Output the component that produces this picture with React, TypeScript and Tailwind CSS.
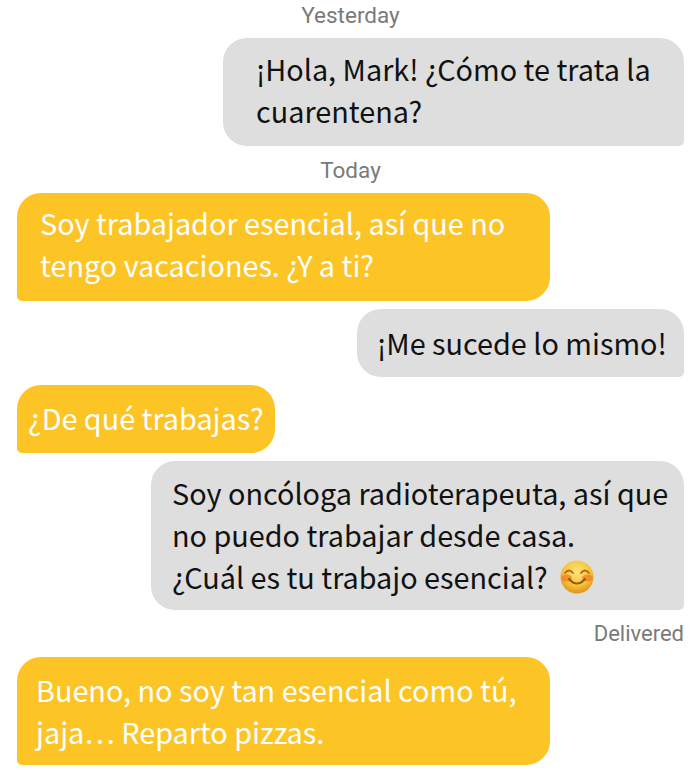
import React from 'react';

const font = "font-['Noto_Sans_CJK_SC','Noto_Sans',sans-serif]";

const Smile: React.FC = () => (
  <svg viewBox="0 0 34 34" className="inline-block w-[34px] h-[34px] align-[-5px] ml-[6px]">
    <defs>
      <radialGradient id="face" cx="50%" cy="35%" r="65%">
        <stop offset="0%" stopColor="#fde27a" />
        <stop offset="60%" stopColor="#f8c63d" />
        <stop offset="100%" stopColor="#e0921c" />
      </radialGradient>
    </defs>
    <circle cx="17" cy="17" r="16.5" fill="url(#face)" />
    <ellipse cx="6.5" cy="18" rx="5.5" ry="3.5" fill="#ee7f22" opacity="0.75" />
    <ellipse cx="27.5" cy="18" rx="5.5" ry="3.5" fill="#ee7f22" opacity="0.75" />
    <path d="M5 13q4-5 8 0M21 13q4-5 8 0" fill="none" stroke="#b5651a" strokeWidth="1.8" strokeLinecap="round" />
    <path d="M9 19q8 9 16 0" fill="none" stroke="#9a5512" strokeWidth="2" strokeLinecap="round" />
  </svg>
);

const Mine: React.FC<{ className: string; children: React.ReactNode }> = ({ className, children }) => (
  <div className={`self-end bg-[#dedede] text-[#111] rounded-[24px] rounded-br-[5px] ${className}`}>{children}</div>
);

const Theirs: React.FC<{ className: string; children: React.ReactNode }> = ({ className, children }) => (
  <div className={`self-start bg-[#fdc425] text-white rounded-[24px] rounded-bl-[5px] ${className}`}>{children}</div>
);

export default function App() {
  return (
    <div className={`w-[700px] h-[773px] overflow-hidden bg-white flex flex-col pl-[17px] pr-[16px] text-[28.8px] leading-[42px] ${font}`}>
      <div className="h-[38px] pt-[2px] text-center font-['Roboto',sans-serif] text-[22.5px] leading-[26px] text-[#7a7a7a]">Yesterday</div>

      <Mine className="w-[461px] h-[108px] pl-[33px] pt-[10px]">
        ¡Hola, Mark! ¿Cómo te trata la<br />cuarentena?
      </Mine>

      <div className="h-[47px] pt-[11px] text-center font-['Roboto',sans-serif] text-[22.5px] leading-[26px] text-[#7a7a7a]">Today</div>

      <Theirs className="w-[533px] h-[108px] pl-[23px] pt-[9px]">
        Soy trabajador esencial, así que no<br />tengo vacaciones. ¿Y a ti?
      </Theirs>

      <Mine className="w-[327px] h-[68px] mt-[8px] pl-[20px] pt-[13px]">¡Me sucede lo mismo!</Mine>

      <Theirs className="w-[258px] h-[68px] mt-[8px] pl-[11px] pt-[12px]">¿De qué trabajas?</Theirs>

      <Mine className="w-[533px] h-[149px] mt-[8px] pl-[21px] pt-[11px]">
        Soy oncóloga radioterapeuta, así que<br />no puedo trabajar desde casa.<br />¿Cuál es tu trabajo esencial? <Smile />
      </Mine>

      <div className="h-[47px] pt-[11px] text-right font-['Roboto',sans-serif] text-[22px] leading-[26px] text-[#7a7a7a]">Delivered</div>

      <Theirs className="w-[533px] h-[108px] pl-[19px] pt-[12px]">
        Bueno, no soy tan esencial como tú,<br />jaja… Reparto pizzas.
      </Theirs>
    </div>
  );
}
